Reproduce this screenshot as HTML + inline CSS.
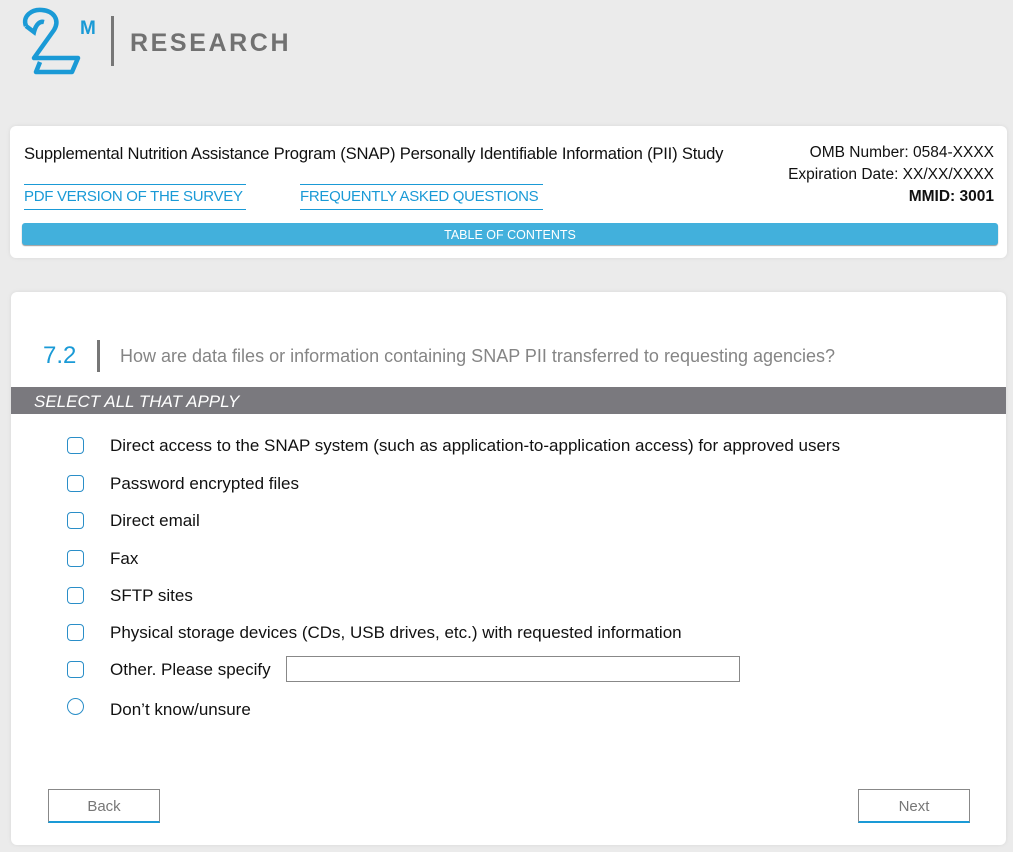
<!DOCTYPE html>
<html><head><meta charset="utf-8"><style>
*{box-sizing:border-box;margin:0;padding:0}
body{width:1013px;height:852px;background:#ebebeb;font-family:"Liberation Sans",sans-serif;position:relative;overflow:hidden;color:#111}
.abs{position:absolute}
.card{position:absolute;background:#fff;border-radius:6px;box-shadow:0 0 4px rgba(0,0,0,0.08)}
.lnk{position:absolute;color:#1a9ad6;font-size:15px;border-top:1px solid #1a9ad6;border-bottom:1px solid #1a9ad6;line-height:24px;white-space:nowrap}
.cb{position:absolute;left:67px;width:17px;height:17px;border:1.5px solid #2a8ec8;border-radius:4px;background:#fff}
.opt{position:absolute;left:110px;font-size:17px;white-space:nowrap;color:#111}
.btn{position:absolute;top:789px;width:112px;height:34px;border:1px solid #888;border-bottom:2px solid #1a9ad6;background:#fff;color:#777;font-size:15px;text-align:center;line-height:34px}
</style></head><body>
<svg class="abs" style="left:14px;top:4px" width="90" height="74" viewBox="0 0 90 74">
<path d="M12 22 C8 12 18 5 28 6 C40 7 46 16 40 26 L20 54 L64 54 L58 68 L22 68 L26 58" fill="none" stroke="#1a9ad6" stroke-width="4.5" stroke-linejoin="round"/>
<path d="M12 22 L20 28 C22 20 26 17 30 18" fill="none" stroke="#1a9ad6" stroke-width="4.5"/>
<text x="66" y="30" font-family="Liberation Sans" font-weight="bold" font-size="19" fill="#1a9ad6">M</text>
</svg>
<div class="abs" style="left:111px;top:16px;width:3px;height:50px;background:#777"></div>
<div class="abs" style="left:130px;top:29px;font-size:25px;letter-spacing:2.6px;color:#717171;font-weight:bold">RESEARCH</div>

<div class="card" style="left:10px;top:126px;width:997px;height:132px"></div>
<div class="abs" style="left:24px;top:144px;font-size:16.6px;letter-spacing:-0.2px">Supplemental Nutrition Assistance Program (SNAP) Personally Identifiable Information (PII) Study</div>
<div class="abs" style="right:19px;top:142px;font-size:15.5px;text-align:right;line-height:22px">OMB Number: 0584-XXXX<br>Expiration Date: XX/XX/XXXX<br><b>MMID: 3001</b></div>
<div class="lnk" style="left:24px;top:184px;width:222px;letter-spacing:-0.3px">PDF VERSION OF THE SURVEY</div>
<div class="lnk" style="left:300px;top:184px;width:243px;letter-spacing:-0.3px">FREQUENTLY ASKED QUESTIONS</div>
<div class="abs" style="left:22px;top:223px;width:976px;height:22px;background:#42b0dc;border-radius:3px;color:#fff;font-size:12.5px;text-align:center;line-height:24px;box-shadow:0 1px 1px #999">TABLE OF CONTENTS</div>

<div class="card" style="left:11px;top:292px;width:995px;height:553px"></div>
<div class="abs" style="left:43px;top:342px;font-size:24px;color:#1a9ad6">7.2</div>
<div class="abs" style="left:97px;top:340px;width:3px;height:32px;background:#777"></div>
<div class="abs" style="left:120px;top:346px;font-size:18px;color:#858585">How are data files or information containing SNAP PII transferred to requesting agencies?</div>
<div class="abs" style="left:11px;top:387px;width:995px;height:27px;background:#7a797e"></div>
<div class="abs" style="left:34px;top:392px;font-size:17px;color:#fff;font-style:italic">SELECT ALL THAT APPLY</div>

<div class="cb" style="top:437px"></div><div class="opt" style="top:436px">Direct access to the SNAP system (such as application-to-application access) for approved users</div>
<div class="cb" style="top:475px"></div><div class="opt" style="top:474px">Password encrypted files</div>
<div class="cb" style="top:512px"></div><div class="opt" style="top:511px">Direct email</div>
<div class="cb" style="top:550px"></div><div class="opt" style="top:549px">Fax</div>
<div class="cb" style="top:587px"></div><div class="opt" style="top:586px">SFTP sites</div>
<div class="cb" style="top:624px"></div><div class="opt" style="top:623px">Physical storage devices (CDs, USB drives, etc.) with requested information</div>
<div class="cb" style="top:661px"></div><div class="opt" style="top:660px">Other. Please specify</div>
<div class="abs" style="left:286px;top:656px;width:454px;height:26px;border:1px solid #888;background:#fff"></div>
<div class="cb" style="top:698px;border-radius:50%"></div><div class="opt" style="top:700px">Don’t know/unsure</div>

<div class="btn" style="left:48px">Back</div>
<div class="btn" style="left:858px">Next</div>
</body></html>
